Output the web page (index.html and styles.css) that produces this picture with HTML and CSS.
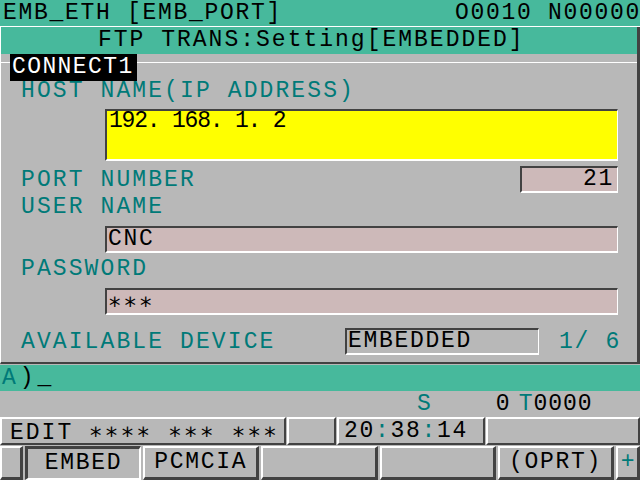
FILE: index.html
```html
<!DOCTYPE html>
<html lang="en">
<head>
    <meta charset="UTF-8">
    <title>FTP TRANS Setting</title>
    <link rel="stylesheet" href="styles.css">
</head>
<body>
<div class="screen">

    <!-- top status line -->
    <header class="topbar">
        <span>EMB_ETH [EMB_PORT]</span>
        <span class="prog">O0010 N00000</span>
    </header>

    <main class="panel">
        <div class="panel-title">FTP TRANS:Setting[EMBEDDED]</div>
        <div class="section-head"><span class="tab">CONNECT1</span></div>

        <div class="form">
            <div class="label first">HOST NAME(IP ADDRESS)</div>
            <div class="field host">192. 168. 1. 2</div>

            <div class="row port-row">
                <span class="label">PORT NUMBER</span>
                <span class="field port">21</span>
            </div>

            <div class="label user">USER NAME</div>
            <div class="field text">CNC</div>

            <div class="label pass">PASSWORD</div>
            <div class="field text"><span class="ast">∗∗∗</span></div>

            <div class="row device-row">
                <span class="label device-label">AVAILABLE DEVICE</span>
                <span class="field device">EMBEDDED</span>
                <span class="counter">1/ 6</span>
            </div>
        </div>
    </main>

    <div class="cmdline"><span class="teal">A</span>)_</div>

    <div class="spindle">
        <span class="teal s">S</span>
        <span class="sval">0</span>
        <span class="teal t">T</span><span>0000</span>
    </div>

    <div class="status">
        <div class="cell mode">EDIT <span class="ast">∗∗∗∗ ∗∗∗ ∗∗∗</span></div>
        <div class="cell blank1"></div>
        <div class="cell clock">20<span class="teal">:</span>38<span class="teal">:</span>14</div>
        <div class="cell blank2"></div>
    </div>

    <nav class="softkeys">
        <div class="key small"></div>
        <div class="key pressed">EMBED</div>
        <div class="key">PCMCIA</div>
        <div class="key"></div>
        <div class="key"></div>
        <div class="key">(OPRT)</div>
        <div class="key plus teal">+</div>
    </nav>

</div>
</body>
</html>
```

FILE: styles.css
```css
/* CNC screen colours */
:root {
    --green: #47b99c;
    --grey: #b8b8b8;
    --teal: #007a78;
    --dark: #424242;
    --pink: #cdb9b9;
    --yellow: #ffff00;
}

body {
    margin: 0;
    background: var(--grey);
    font-family: 'Liberation Mono', 'DejaVu Sans Mono', monospace;
    font-size: 23px;
    letter-spacing: 1.7px;
    color: black;
}

.screen {
    width: 640px;
    height: 480px;
    display: flex;
    flex-direction: column;
    overflow: hidden;
}

.teal {
    color: var(--teal);
}

/* big centred asterisks like the control font */
.ast {
    font-family: 'DejaVu Sans Mono', monospace;
}

/* top line */
.topbar {
    height: 26px;
    line-height: 26px;
    background: var(--green);
    border-bottom: 1px solid white;
    display: flex;
    justify-content: space-between;
    padding-left: 3px;
    white-space: pre;
}

.topbar .prog {
    margin-right: -1px;
}

/* main panel */
.panel {
    height: 335px;
    border-left: 1px solid white;
    border-right: 3px solid var(--dark);
    border-bottom: 2px solid var(--dark);
    display: flex;
    flex-direction: column;
}

.panel-title {
    height: 27px;
    line-height: 27px;
    background: var(--green);
    padding-left: 97px;
    letter-spacing: 2px;
    white-space: pre;
}

.section-head {
    height: 27px;
    background: linear-gradient(to bottom, transparent 8px, white 8px, white 9px, transparent 9px);
}

.tab {
    display: inline-block;
    margin-left: 9px;
    height: 27px;
    line-height: 27px;
    padding: 0 3px 0 2px;
    background: black;
    color: white;
    letter-spacing: 1.4px;
}

.form {
    padding-left: 20px;
    padding-right: 19px;
    display: flex;
    flex-direction: column;
}

.label {
    color: var(--teal);
    white-space: pre;
    line-height: 22px;
    letter-spacing: 2.1px;
}

.label.first {
    height: 21px;
    line-height: 21px;
}

.label.user {
    margin-top: 3px;
}

.label.pass {
    margin-top: 5px;
}

.field {
    box-sizing: border-box;
    border-top: 2px solid var(--dark);
    border-left: 2px solid var(--dark);
    border-right: 1px solid white;
    border-bottom: 2px solid white;
    background: var(--pink);
    white-space: pre;
}

.field.host {
    margin-top: 7px;
    margin-left: 84px;
    height: 52px;
    background: var(--yellow);
    line-height: 20px;
    padding-left: 2px;
    letter-spacing: -1.2px;
}

.field.text {
    margin-top: 8px;
    margin-left: 84px;
    height: 27px;
    line-height: 23px;
    padding-left: 1px;
}

.row {
    display: flex;
    align-items: center;
    height: 27px;
}

.port-row {
    margin-top: 5px;
    justify-content: space-between;
}

.field.port {
    width: 98px;
    height: 27px;
    line-height: 23px;
    text-align: right;
    padding-right: 3px;
}

.device-row {
    margin-top: 13px;
}

.device-label {
    width: 324px;
}

.field.device {
    width: 194px;
    height: 27px;
    line-height: 23px;
    background: var(--grey);
    padding-left: 1px;
}

.counter {
    color: var(--teal);
    margin-left: auto;
    white-space: pre;
    margin-right: -3px;
}

/* command line */
.cmdline {
    margin-top: 1px;
    height: 26px;
    line-height: 26px;
    background: var(--green);
    padding-left: 2px;
    letter-spacing: 4px;
}

.spindle {
    height: 26px;
    line-height: 26px;
    display: flex;
    letter-spacing: 1px;
}

.spindle .s {
    margin-left: 417px;
}

.spindle .sval {
    margin-left: 64px;
}

.spindle .t {
    margin-left: 8px;
}

/* mode / clock line */
.status {
    height: 28px;
    display: flex;
    gap: 1px;
}

.cell {
    box-sizing: border-box;
    height: 28px;
    line-height: 24px;
    border-top: 2px solid white;
    border-left: 2px solid white;
    border-bottom: 2px solid var(--dark);
    border-right: 2px solid var(--dark);
    white-space: pre;
}

.mode {
    width: 286px;
    padding-left: 8px;
    letter-spacing: 2px;
}

.blank1 {
    width: 49px;
}

.clock {
    width: 148px;
    padding-left: 5px;
}

.blank2 {
    flex: 1;
}

/* soft keys */
.softkeys {
    margin-top: 1px;
    height: 34px;
    display: flex;
    gap: 2px;
}

.key {
    box-sizing: border-box;
    width: 117px;
    height: 34px;
    line-height: 28px;
    text-align: center;
    border-top: 2px solid white;
    border-left: 2px solid white;
    border-bottom: 3px solid var(--dark);
    border-right: 3px solid var(--dark);
    white-space: pre;
}

.key.small {
    width: 23px;
}

.key.pressed {
    border-top: 3px solid var(--dark);
    border-left: 3px solid var(--dark);
    border-bottom: 2px solid white;
    border-right: 2px solid white;
}

.key.plus {
    width: 24px;
    letter-spacing: 0;
}
```
